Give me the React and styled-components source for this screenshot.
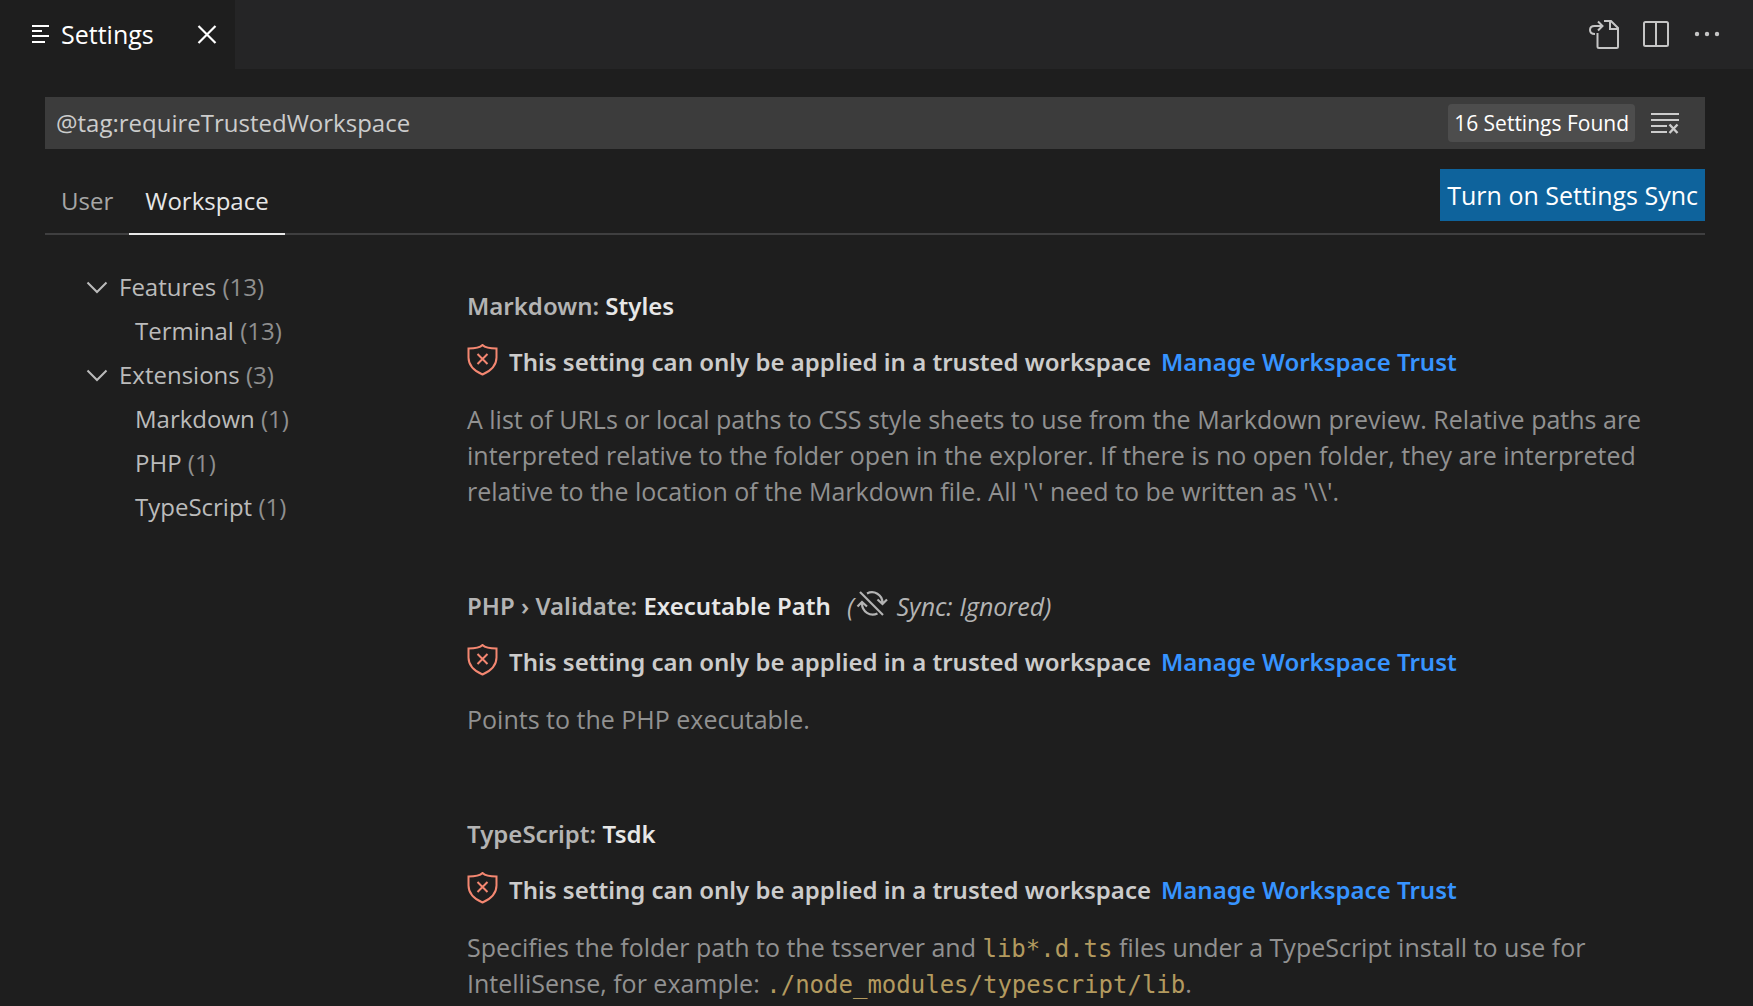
import React from 'react';
import styled, { createGlobalStyle } from 'styled-components';

const ui = `"Open Sans", "Noto Sans", sans-serif`;
const strong = `"Noto Sans", "Open Sans", sans-serif`;
const mono = `"DejaVu Sans Mono", monospace`;

const GlobalStyle = createGlobalStyle`
  *, *::before, *::after { box-sizing: border-box; }
  body {
    margin: 0;
    background: #1e1e1e;
    color: #cccccc;
    font: 25px/36px ${ui};
  }
  button, input { font: inherit; color: inherit; }
  h2, p, ul { margin: 0; padding: 0; font: inherit; }
  ul { list-style: none; }
`;

const Editor = styled.div`
  display: flex;
  flex-direction: column;
  height: 100vh;
  overflow: hidden;
`;

const TitleBar = styled.header`
  display: flex;
  justify-content: space-between;
  flex: none;
  height: 69px;
  background: #252526;
`;

const EditorTab = styled.div`
  display: flex;
  align-items: center;
  gap: 5px;
  padding: 0 12px 2px 24px;
  background: #1e1e1e;
  color: #ffffff;
`;

const TabName = styled.span`
  width: 125px;
`;

const IconButton = styled.button`
  display: flex;
  flex: none;
  padding: 0;
  border: 0;
  background: none;
`;

const Actions = styled.div`
  display: flex;
  align-items: center;
  gap: 20px;
  padding: 0 29px 2px;
  color: #c5c5c5;
`;

const Icon = styled.svg`
  display: block;
  flex: none;
  width: 32px;
  height: 32px;
  fill: none;
  stroke: currentColor;
`;

const Header = styled.div`
  flex: none;
  padding: 28px 48px 0 45px;
`;

const SearchBox = styled.div`
  display: flex;
  align-items: center;
  gap: 14px;
  height: 52px;
  padding: 0 24px 0 11px;
  background: #3c3c3c;
`;

const SearchInput = styled.input`
  flex: 1;
  min-width: 0;
  padding: 0;
  border: 0;
  outline: 0;
  background: none;
  font-size: 24px;
`;

const CountBadge = styled.span`
  padding: 2px 6px;
  border-radius: 4px;
  background: #4d4d4d;
  color: #ffffff;
  font-size: 21px;
  line-height: 34px;
`;

const TargetBar = styled.div`
  display: flex;
  justify-content: space-between;
  align-items: flex-start;
  height: 86px;
  padding-top: 20px;
  border-bottom: 2px solid #3f3f40;
`;

const Targets = styled.div`
  display: flex;
`;

const Target = styled.button`
  height: 66px;
  padding: 0 16px;
  border: 0;
  border-bottom: 2px solid ${p => (p.$active ? '#e7e7e7' : 'transparent')};
  background: none;
  color: ${p => (p.$active ? '#e7e7e7' : '#a6a6a6')};
  font-size: 24px;
`;

const SyncButton = styled.button`
  height: 52px;
  padding: 0 7px;
  border: 0;
  background: #0e639c;
  color: #ffffff;
`;

const Body = styled.div`
  display: flex;
  flex: 1;
  min-height: 0;
  padding: 0 64px 0 45px;
`;

const Toc = styled.nav`
  flex: none;
  width: 422px;
  padding: 30px 0 0 36px;
  font-size: 24px;
`;

const TocItem = styled.a`
  display: flex;
  align-items: center;
  padding-left: ${p => (p.$nested ? 54 : 0)}px;
  color: #bbbbbb;
  line-height: 44px;
  text-decoration: none;
  white-space: pre;
`;

const Chevron = styled(Icon)`
  margin-right: 6px;
`;

const Count = styled.span`
  color: #8f8f8f;
`;

const SettingList = styled.main`
  flex: 1;
  min-width: 0;
  padding-top: 53px;
`;

const Setting = styled.section`
  padding-bottom: 79px;
`;

const Title = styled.h2`
  display: flex;
  align-items: center;
  margin-bottom: 20px;
  color: #e7e7e7;
  font: 600 24px/36px ${strong};
  white-space: pre;
`;

const Category = styled.span`
  color: #b4b4b4;
`;

const SyncNote = styled.em`
  display: flex;
  align-items: center;
  margin-left: 16px;
  color: #b4b4b4;
  font: italic 25px/36px ${ui};
`;

const SyncIcon = styled(Icon)`
  margin: 0 2px;
`;

const TrustRow = styled.div`
  display: flex;
  align-items: center;
  gap: 10px;
  margin-bottom: 21px;
  font: 600 24px/36px ${strong};
`;

const Shield = styled(Icon)`
  align-self: flex-start;
  color: #f48771;
`;

const TrustLink = styled.a`
  color: #3794ff;
  text-decoration: none;
`;

const Description = styled.p`
  color: #919191;
`;

const Code = styled.code`
  color: #b39a5f;
  font: 24px/24px ${mono};
`;

const SettingsGlyph = () => (
  <Icon viewBox="0 0 32 32" strokeWidth="2">
    <path d="M8 8h17M8 13h10M8 18h17M8 24h13" />
  </Icon>
);

const CloseGlyph = () => (
  <Icon viewBox="0 0 32 32" strokeWidth="2.2">
    <path d="M7.500 8l17 17M24.500 8l-17 17" />
  </Icon>
);

const GoToFileGlyph = () => (
  <Icon viewBox="0 0 32 32" strokeWidth="2">
    <path d="M16 3h7l7 7v18.500a1.500 1.500 0 0 1-1.500 1.500H11a1.500 1.500 0 0 1-1.500-1.500V15" />
    <path d="M22 3v8h8" />
    <path d="M7 16C3 16 2 13.500 2 12c0-2.500 2-4 4.500-4H14M10 3.500L14.500 8 10 12.500" />
  </Icon>
);

const SplitGlyph = () => (
  <Icon viewBox="0 0 32 32" strokeWidth="2">
    <rect x="4" y="4" width="24" height="24" rx="1.500" />
    <path d="M16 4v24" />
  </Icon>
);

const MoreGlyph = () => (
  <Icon viewBox="0 0 32 32" style={{ fill: 'currentColor', stroke: 'none' }}>
    <circle cx="5" cy="16" r="2.200" />
    <circle cx="15" cy="16" r="2.200" />
    <circle cx="25" cy="16" r="2.200" />
  </Icon>
);

const ClearGlyph = () => (
  <Icon viewBox="0 0 32 32" strokeWidth="2">
    <path d="M2 7h28M2 13h28M2 19h16M2 25h16" />
    <path d="M20.500 17.500l8 8.500M28.500 17.500l-8 8.500" strokeWidth="2.400" />
  </Icon>
);

const SyncIgnoredGlyph = () => (
  <SyncIcon viewBox="0 0 32 32" strokeWidth="2.200">
    <path d="M4 2l23 23" />
    <path d="M11 3.500C18 0 26.500 4.500 26.500 13M21.500 9.500L26.500 14l4.500-4.500" />
    <path d="M21.500 23.500C14 27 6 21.500 6 13.500M1.500 16.500L6 12l5 4.500" />
  </SyncIcon>
);

const ShieldGlyph = () => (
  <Shield viewBox="0 0 32 32" strokeWidth="2">
    <path d="M15.500 1C13 3.500 8 4.500 1.500 4.500v9c0 8 6 13.500 14 17C23.500 27 29.500 21.500 29.500 13.500V4.500C23 4.500 18 3.500 15.500 1z" />
    <path d="M10.500 10l10 10M20.500 10l-10 10" />
  </Shield>
);

const toc = [
  { name: 'Features', count: 13, children: [{ name: 'Terminal', count: 13 }] },
  {
    name: 'Extensions',
    count: 3,
    children: [
      { name: 'Markdown', count: 1 },
      { name: 'PHP', count: 1 },
      { name: 'TypeScript', count: 1 },
    ],
  },
];

const settings = [
  {
    category: 'Markdown: ',
    name: 'Styles',
    text: "A list of URLs or local paths to CSS style sheets to use from the Markdown preview. Relative paths are interpreted relative to the folder open in the explorer. If there is no open folder, they are interpreted relative to the location of the Markdown file. All '\\' need to be written as '\\\\'.",
  },
  {
    category: 'PHP › Validate: ',
    name: 'Executable Path',
    syncIgnored: true,
    text: 'Points to the PHP executable.',
  },
  {
    category: 'TypeScript: ',
    name: 'Tsdk',
    text: (
      <>
        Specifies the folder path to the tsserver and <Code>lib*.d.ts</Code> files under a
        TypeScript install to use for IntelliSense, for example:{' '}
        <Code>./node_modules/typescript/lib</Code>.
      </>
    ),
  },
];

const TocEntry = ({ entry, nested }) => (
  <li>
    <TocItem href="#" $nested={nested}>
      {!nested && (
        <Chevron viewBox="0 0 32 32" strokeWidth="2">
          <path d="M6.500 11.500l9.500 9.500 9.500-9.500" />
        </Chevron>
      )}
      {entry.name} <Count>({entry.count})</Count>
    </TocItem>
    {entry.children && (
      <ul>
        {entry.children.map(child => (
          <TocEntry key={child.name} entry={child} nested />
        ))}
      </ul>
    )}
  </li>
);

export default function App() {
  return (
    <Editor>
      <GlobalStyle />
      <TitleBar>
        <EditorTab>
          <SettingsGlyph />
          <TabName>Settings</TabName>
          <IconButton aria-label="Close"><CloseGlyph /></IconButton>
        </EditorTab>
        <Actions>
          <IconButton aria-label="Open Settings (JSON)"><GoToFileGlyph /></IconButton>
          <IconButton aria-label="Split Editor"><SplitGlyph /></IconButton>
          <IconButton aria-label="More Actions"><MoreGlyph /></IconButton>
        </Actions>
      </TitleBar>
      <Header>
        <SearchBox>
          <SearchInput aria-label="Search settings" defaultValue="@tag:requireTrustedWorkspace" spellCheck={false} />
          <CountBadge>16 Settings Found</CountBadge>
          <IconButton aria-label="Clear Search"><ClearGlyph /></IconButton>
        </SearchBox>
        <TargetBar>
          <Targets>
            <Target>User</Target>
            <Target $active>Workspace</Target>
          </Targets>
          <SyncButton>Turn on Settings Sync</SyncButton>
        </TargetBar>
      </Header>
      <Body>
        <Toc aria-label="Settings groups">
          <ul>
            {toc.map(entry => (
              <TocEntry key={entry.name} entry={entry} />
            ))}
          </ul>
        </Toc>
        <SettingList>
          {settings.map(s => (
            <Setting key={s.name}>
              <Title>
                <Category>{s.category}</Category>
                {s.name}
                {s.syncIgnored && (
                  <SyncNote>
                    (<SyncIgnoredGlyph /> Sync: Ignored)
                  </SyncNote>
                )}
              </Title>
              <TrustRow>
                <ShieldGlyph />
                <span>This setting can only be applied in a trusted workspace</span>
                <TrustLink href="#">Manage Workspace Trust</TrustLink>
              </TrustRow>
              <Description>{s.text}</Description>
            </Setting>
          ))}
        </SettingList>
      </Body>
    </Editor>
  );
}
